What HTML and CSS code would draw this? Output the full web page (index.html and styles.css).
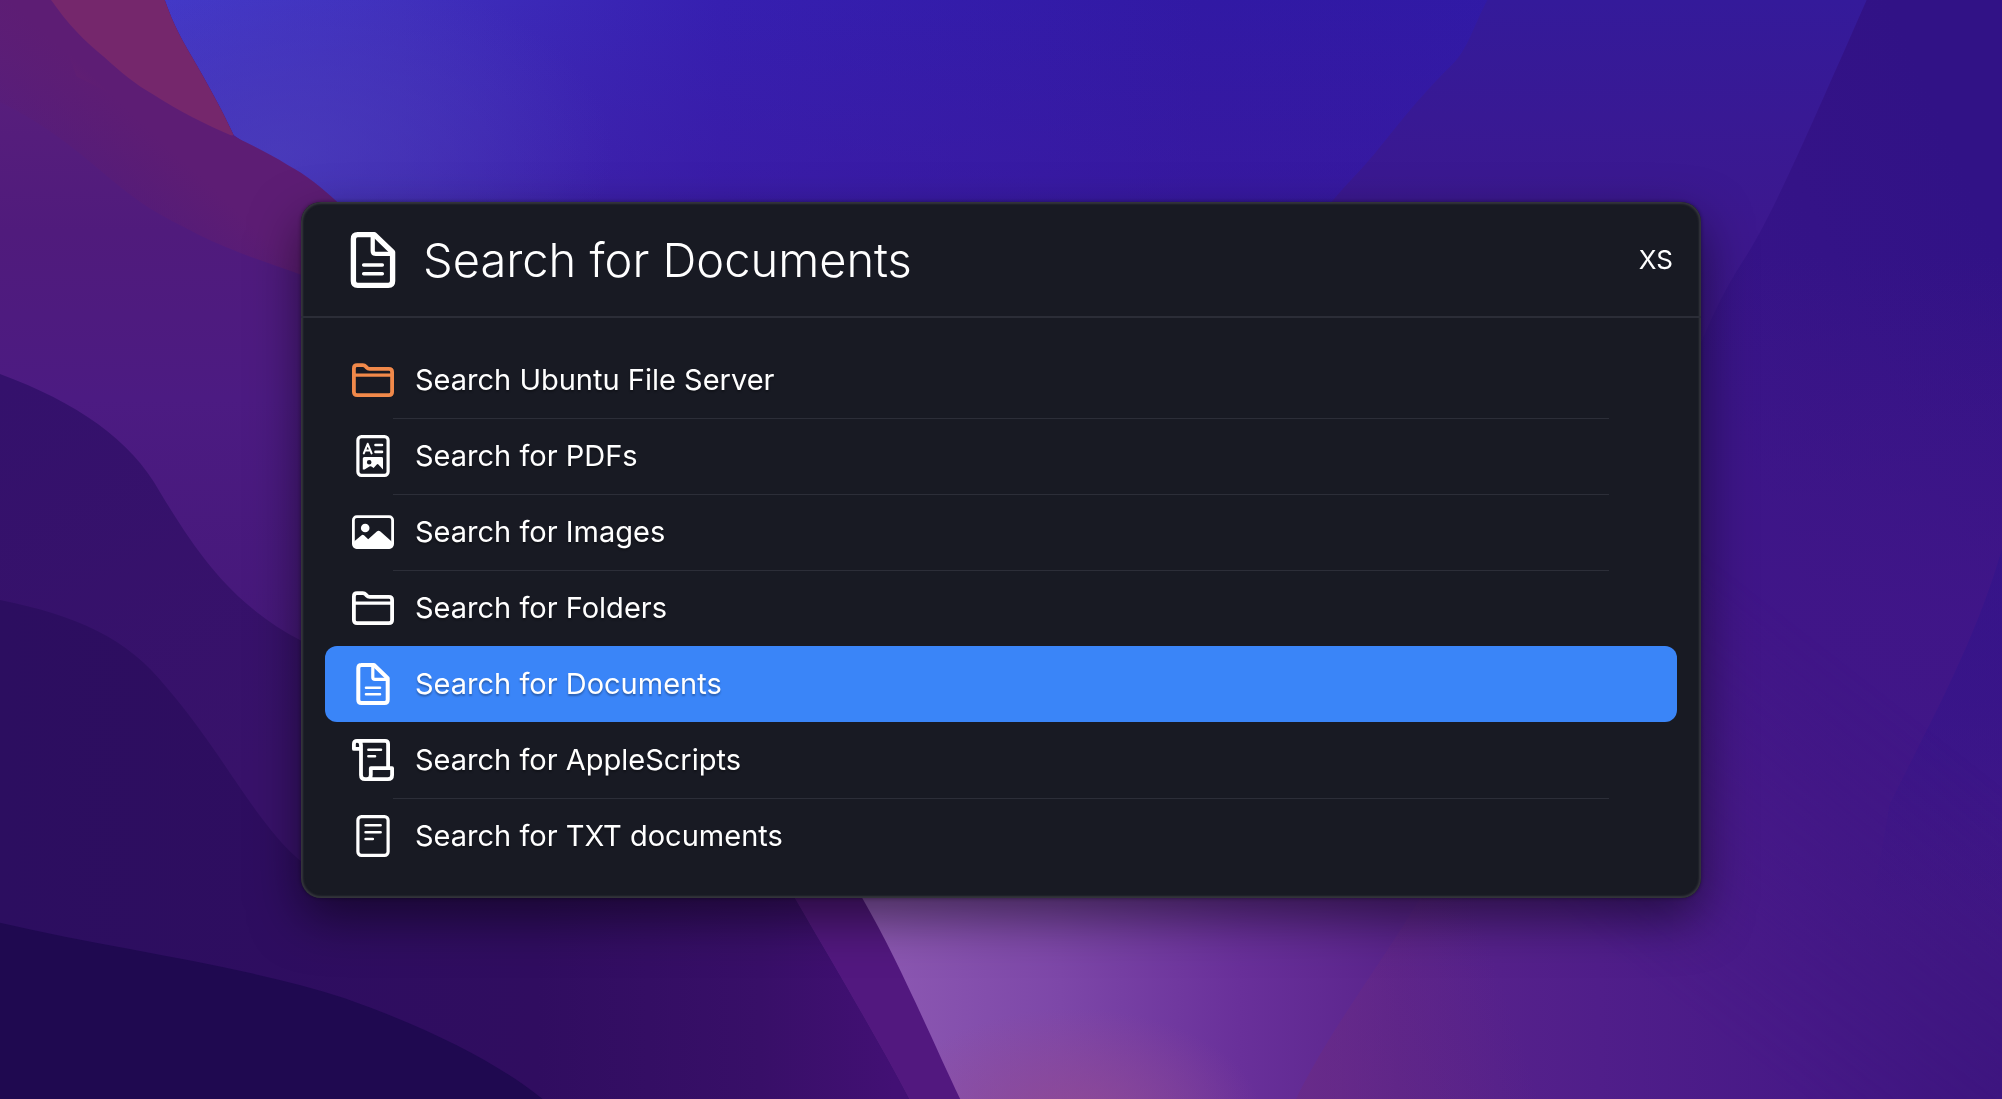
FILE: index.html
```html
<!DOCTYPE html>
<html lang="en">
<head>
<meta charset="utf-8">
<title>Search for Documents</title>
<link rel="stylesheet" href="styles.css">
</head>
<body>
<svg class="wallpaper" viewBox="0 0 1568 861" preserveAspectRatio="none" aria-hidden="true">
  <defs>
    <linearGradient id="sky" x1="0" y1="0" x2="1" y2="0">
      <stop offset="0.08" stop-color="#4238c8"/><stop offset="0.2" stop-color="#3f2fbc"/><stop offset="0.36" stop-color="#361fb0"/><stop offset="0.6" stop-color="#3119a4"/><stop offset="1" stop-color="#2f1aa8"/>
    </linearGradient>
    <linearGradient id="skyfade" x1="0" y1="0" x2="0" y2="1">
      <stop offset="0" stop-color="#40189a" stop-opacity="0"/><stop offset="1" stop-color="#40189a" stop-opacity="0.5"/>
    </linearGradient>
    <radialGradient id="glow"><stop offset="0" stop-color="#4c40bc" stop-opacity="0.7"/><stop offset="1" stop-color="#4c40bc" stop-opacity="0"/></radialGradient>
    <linearGradient id="right" gradientUnits="userSpaceOnUse" x1="1250" y1="0" x2="1250" y2="300">
      <stop offset="0" stop-color="#341a9a"/><stop offset="0.6" stop-color="#3c188e"/><stop offset="1" stop-color="#3c1688"/>
    </linearGradient>
    <linearGradient id="edge" gradientUnits="userSpaceOnUse" x1="1340" y1="300" x2="1568" y2="200">
      <stop offset="0" stop-color="#371488"/><stop offset="1" stop-color="#311286"/>
    </linearGradient>
    <linearGradient id="edgelow" gradientUnits="userSpaceOnUse" x1="0" y1="200" x2="0" y2="760">
      <stop offset="0" stop-color="#441888" stop-opacity="0"/><stop offset="0.5" stop-color="#421688" stop-opacity="0.8"/><stop offset="1" stop-color="#421886"/>
    </linearGradient>
    <linearGradient id="slope" gradientUnits="userSpaceOnUse" x1="0" y1="430" x2="0" y2="720">
      <stop offset="0" stop-color="#31138a" stop-opacity="0.6"/><stop offset="0.4" stop-color="#31138a" stop-opacity="0.5"/><stop offset="1" stop-color="#31138a" stop-opacity="0"/>
    </linearGradient>
    <linearGradient id="bottom" gradientUnits="userSpaceOnUse" x1="690" y1="0" x2="1568" y2="0">
      <stop offset="0" stop-color="#8c58b2"/><stop offset="0.16" stop-color="#7d47a8"/><stop offset="0.32" stop-color="#69309a"/><stop offset="0.46" stop-color="#5a248c"/><stop offset="0.64" stop-color="#501e8a"/><stop offset="0.82" stop-color="#471987"/><stop offset="1" stop-color="#3b147c"/>
    </linearGradient>
    <linearGradient id="bottommask" gradientUnits="userSpaceOnUse" x1="1240" y1="730" x2="1420" y2="500">
      <stop offset="0" stop-color="#fff"/><stop offset="1" stop-color="#fff" stop-opacity="0"/>
    </linearGradient>
    <mask id="fade"><rect width="1568" height="861" fill="url(#bottommask)"/></mask>
    <radialGradient id="pink"><stop offset="0" stop-color="#914a94" stop-opacity="0.9"/><stop offset="1" stop-color="#914a94" stop-opacity="0"/></radialGradient>
    <linearGradient id="maroon" gradientUnits="userSpaceOnUse" x1="1030" y1="830" x2="1180" y2="780">
      <stop offset="0" stop-color="#6c2a80" stop-opacity="0.5"/><stop offset="1" stop-color="#6c2a80" stop-opacity="0"/>
    </linearGradient>
    <linearGradient id="left" gradientUnits="userSpaceOnUse" x1="0" y1="0" x2="0" y2="520">
      <stop offset="0" stop-color="#5c207c"/><stop offset="0.35" stop-color="#501b7c"/><stop offset="0.6" stop-color="#4c1b82"/><stop offset="1" stop-color="#451879"/>
    </linearGradient>
    <linearGradient id="ribbon" gradientUnits="userSpaceOnUse" x1="50" y1="150" x2="120" y2="75">
      <stop offset="0" stop-color="#5c1c70" stop-opacity="0"/><stop offset="0.8" stop-color="#5d1d74"/>
    </linearGradient>
    <linearGradient id="hill" gradientUnits="userSpaceOnUse" x1="0" y1="300" x2="180" y2="620">
      <stop offset="0" stop-color="#34116c"/><stop offset="1" stop-color="#38126a"/>
    </linearGradient>
    <linearGradient id="valley" gradientUnits="userSpaceOnUse" x1="0" y1="0" x2="700" y2="0">
      <stop offset="0" stop-color="#2c0e60"/><stop offset="0.6" stop-color="#300d60"/><stop offset="0.85" stop-color="#380f68"/><stop offset="1" stop-color="#421074"/>
    </linearGradient>
  </defs>
  <rect width="1568" height="861" fill="url(#sky)"/>
  <rect width="1568" height="190" fill="url(#skyfade)"/>
  <ellipse cx="220" cy="120" rx="260" ry="150" fill="url(#glow)"/>
  <path d="M1165 0C1155 18 1150 38 1138 50C1105 82 1080 118 1070 128C1055 145 1040 158 1020 190V861H1568V0Z" fill="url(#right)"/>
  <path d="M1462 0C1420 95 1390 165 1368 200C1345 235 1330 270 1310 330V861H1568V0Z" fill="url(#edge)"/>
  <path d="M1310 200H1568V861H1310Z" fill="url(#edgelow)"/>
  <path d="M1568 430C1548 500 1515 560 1480 630L1440 861H1568Z" fill="url(#slope)"/>
  <g mask="url(#fade)">
    <path d="M640 300H1568V861H640Z" fill="url(#bottom)"/>
    <ellipse cx="840" cy="880" rx="150" ry="90" fill="url(#pink)"/>
    <path d="M1120 690C1090 745 1045 800 1015 861H1300V690Z" fill="url(#maroon)"/>
  </g>
  <path d="M0 0H129C136 20 143 32 150 44C162 65 172 82 183 106L270 165L350 400L675 703C705 755 730 815 752 861H0Z" fill="#52187f"/>
  <path d="M0 0H129C136 20 143 32 150 44C162 65 172 82 183 106L350 220V520H0Z" fill="url(#left)"/>
  <path d="M38 0H129C136 20 143 32 150 44C162 65 172 82 183 106L160 110L60 60Z" fill="#75276c"/>
  <path d="M0 0H40C54 20 66 32 82 45C94 56 106 66 120 74C140 87 160 97 183 107C198 114 212 121 225 129C240 137 252 147 264 158L300 240L230 213C200 203 170 192 150 181C138 175 130 171 120 165C80 140 60 110 0 80Z" fill="url(#ribbon)"/>
  <path d="M0 293C60 315 103 345 125 385C158 440 185 475 236 502L500 640L622 703C655 760 685 810 712 861H0Z" fill="url(#hill)"/>
  <path d="M0 470C60 482 100 500 130 538C175 590 200 645 236 675L400 680L622 703C655 760 685 810 712 861H0Z" fill="url(#valley)"/>
  <path d="M0 723C90 744 190 756 270 782C340 807 390 833 425 861H0Z" fill="#1f0950"/>
</svg>

<svg class="sprite" aria-hidden="true">
  <symbol id="i-document" viewBox="0 0 42 42">
    <g fill="none" stroke="currentColor" stroke-linejoin="round" stroke-linecap="round">
      <path stroke-width="4" d="M9.3 2H22L35.7 15.2V36.8Q35.7 40 32.5 40H9.5Q6.3 40 6.3 36.8V5.2Q6.3 2 9.5 2Z"/>
      <path stroke-width="3.2" d="M20.8 3V14.2Q20.8 16.4 23 16.4H35"/>
      <path stroke-width="2.6" d="M14 24.8H28M14 31.3H28"/>
    </g>
  </symbol>
  <symbol id="i-folder" viewBox="0 0 42 42">
    <g fill="none" stroke="currentColor" stroke-linejoin="round">
      <path stroke-width="3.8" d="M1.9 33V9.4Q1.9 6.2 5.1 6.2H10.8Q12.6 6.2 13.8 7.6L14.6 8.5Q15.8 9.8 17.6 9.8H36.9Q40.1 9.8 40.1 13V33Q40.1 36.1 36.9 36.1H5.1Q1.9 36.1 1.9 33Z"/>
      <path stroke-width="3.2" d="M2 16.2H40"/>
    </g>
  </symbol>
  <symbol id="i-image" viewBox="0 0 42 42">
    <rect x="1.4" y="5.7" width="39.2" height="30.8" rx="3.4" fill="none" stroke="currentColor" stroke-width="2.8"/>
    <circle cx="13.2" cy="17" r="4.3" fill="currentColor"/>
    <path fill="currentColor" d="M1.5 31L9.6 24.2Q10.8 23.2 12 24.2L16.2 28.2L24.8 20.6Q26.6 19 28.4 20.6L40.8 31.6V34Q40 37.4 37 37.4H5Q2 37.4 1.5 34Z"/>
  </symbol>
  <symbol id="i-script" viewBox="0 0 42 42">
    <g fill="none" stroke="currentColor" stroke-linejoin="round" stroke-linecap="round">
      <path stroke-width="3.8" d="M9.2 9.9H1.9V5Q1.9 1.9 5 1.9H33Q36.1 1.9 36.1 5V28.6M5 1.9Q9 1.9 9 6V36Q9 40.1 13 40.1H36Q40.1 40.1 40.1 36V29.2H18.8V36Q18.8 40.1 15 40.1"/>
      <path stroke-width="2.6" d="M16.4 10.8H29M16.4 17.2H23"/>
    </g>
  </symbol>
  <symbol id="i-text" viewBox="0 0 42 42">
    <rect x="5.9" y="1.6" width="30.2" height="38.8" rx="3.6" fill="none" stroke="currentColor" stroke-width="3.2"/>
    <path d="M13.6 10.3H28.6M13.6 17.2H28.6M13.6 24H20.8" fill="none" stroke="currentColor" stroke-width="2.6" stroke-linecap="round"/>
  </symbol>
</svg>

<main class="desktop">
  <section class="launcher" aria-label="Launcher">
    <header class="search">
      <svg class="search-icon" aria-hidden="true"><use href="#i-document"/></svg>
      <input class="search-input" type="text" aria-label="Search" value="Search for Documents">
      <span class="search-size">XS</span>
    </header>
    <ul class="results">
      <li class="item"><button class="row" type="button"><svg class="icon icon-orange" aria-hidden="true"><use href="#i-folder"/></svg>Search Ubuntu File Server</button></li>
      <li class="item item-ruled"><button class="row" type="button">
        <svg class="icon" viewBox="0 0 42 42" aria-hidden="true">
          <rect x="5.9" y="1.6" width="30.2" height="38.8" rx="3.6" fill="none" stroke="currentColor" stroke-width="3.2"/>
          <path d="M11.8 18.4L15.7 8.8L19.6 18.4M13.2 15.6H18.2" fill="none" stroke="currentColor" stroke-width="2" stroke-linecap="round" stroke-linejoin="round"/>
          <path d="M23.5 10H30M23.5 16.9H30" stroke="currentColor" stroke-width="2.6" stroke-linecap="round"/>
          <path fill="currentColor" fill-rule="evenodd" d="M12.4 22H29.6Q31 22 31 23.4V34.6L26.4 29.4Q25.6 28.6 24.8 29.4L21.6 33L19.4 31.6Q18.4 31 17.4 31.6L12.6 34.6H10.8V23.6Q10.8 22 12.4 22ZM17.2 25A2.3 2.3 0 1 0 17.2 29.6A2.3 2.3 0 1 0 17.2 25Z"/>
        </svg>Search for PDFs</button></li>
      <li class="item item-ruled"><button class="row" type="button"><svg class="icon" aria-hidden="true"><use href="#i-image"/></svg>Search for Images</button></li>
      <li class="item item-ruled"><button class="row" type="button"><svg class="icon" aria-hidden="true"><use href="#i-folder"/></svg>Search for Folders</button></li>
      <li class="item"><button class="row row-selected" type="button"><svg class="icon" aria-hidden="true"><use href="#i-document"/></svg>Search for Documents</button></li>
      <li class="item"><button class="row" type="button"><svg class="icon" aria-hidden="true"><use href="#i-script"/></svg>Search for AppleScripts</button></li>
      <li class="item item-ruled"><button class="row" type="button"><svg class="icon" aria-hidden="true"><use href="#i-text"/></svg>Search for TXT documents</button></li>
    </ul>
  </section>
</main>
</body>
</html>
```
FILE: styles.css
```css
* {
  box-sizing: border-box;
}

body {
  margin: 0;
  background: #30106a;
  color: #fff;
  font-family: Inter, "Liberation Sans", sans-serif;
}

.wallpaper {
  position: fixed;
  inset: 0;
  width: 100%;
  height: 100%;
}

.sprite {
  position: absolute;
  width: 0;
  height: 0;
}

.desktop {
  position: relative;
  display: flex;
  align-items: center;
  justify-content: center;
  min-height: 100vh;
  padding: 25px 24px 24px;
}

.launcher {
  flex: 1;
  max-width: 1400px;
  border-radius: 20px;
  background: #181a23;
  box-shadow: inset 0 0 2px 2px #34353c, 0 0 4px rgba(0, 0, 0, 0.4), 0 20px 50px rgba(0, 0, 0, 0.5);
}

.search {
  display: flex;
  align-items: center;
  height: 116px;
  padding: 2px 28px 0 44px;
  border-bottom: 2px solid #2b2d37;
}

.search-icon {
  flex: none;
  width: 56px;
  height: 56px;
}

.search-input {
  flex: 1;
  min-width: 0;
  height: 76px;
  margin: 0 24px 0 22px;
  padding: 0;
  border: 0;
  outline: 0;
  background: none;
  color: inherit;
  font: 350 47px/76px Inter, "Liberation Sans", sans-serif;
}

.search-size {
  font-size: 26px;
  line-height: 32px;
}

.results {
  margin: 0;
  padding: 24px;
  list-style: none;
}

.item {
  position: relative;
}

.item-ruled::before {
  content: "";
  position: absolute;
  top: 0;
  left: 68px;
  right: 68px;
  height: 1px;
  background: #2c2e38;
}

.row {
  display: flex;
  align-items: center;
  gap: 21px;
  width: 100%;
  height: 76px;
  padding: 0 27px;
  border: 0;
  border-radius: 12px;
  background: none;
  color: inherit;
  font: 400 29px/36px Inter, "Liberation Sans", sans-serif;
  text-align: left;
  text-shadow: 0 2px 2px rgba(0, 0, 0, 0.3);
}

.row-selected {
  background: #3a85f8;
}

.icon {
  flex: none;
  width: 42px;
  height: 42px;
}

.icon-orange {
  color: #f1894a;
}
```
